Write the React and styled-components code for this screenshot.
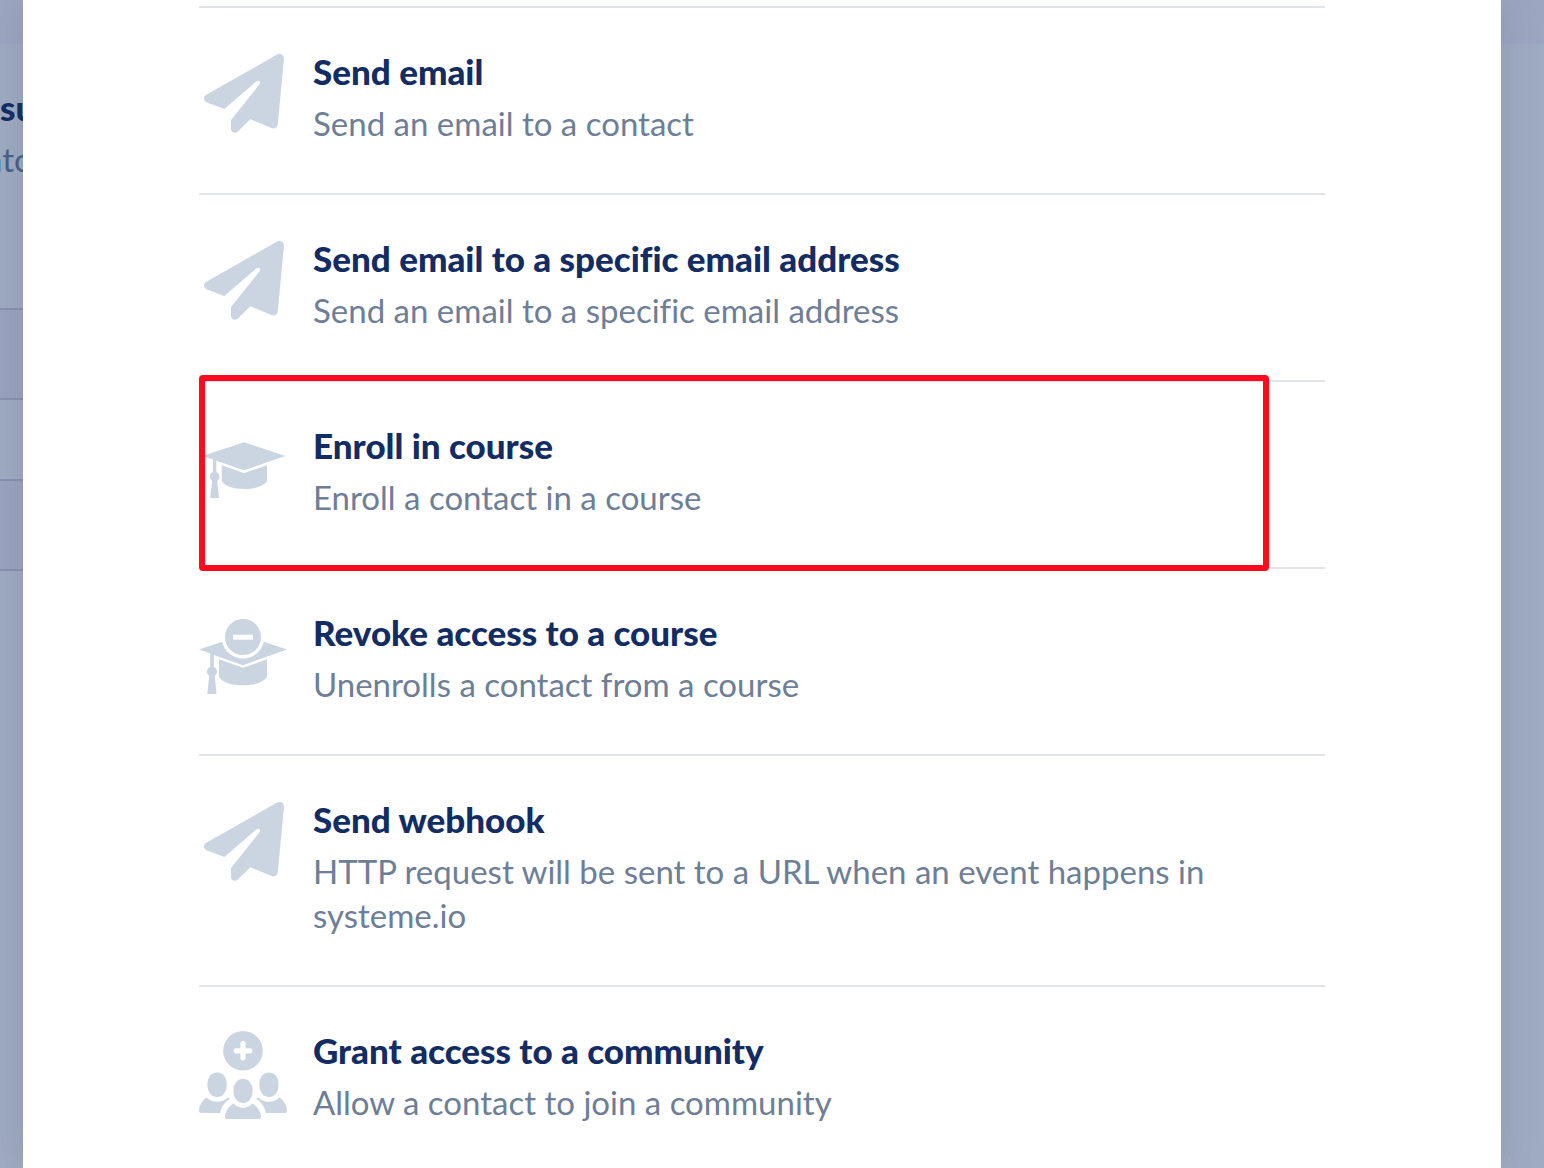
// react
import React, { useState } from "react";

// style
import styled, { createGlobalStyle } from "styled-components";

const GlobalStyle = createGlobalStyle`
  * {
    box-sizing: border-box;
  }

  body {
    margin: 0;
    background: #9fa9c2;
    font-family: Lato, "Liberation Sans", sans-serif;
  }
`;

const PageWrap = styled.div`
  display: grid;
  grid-template-columns: 23px 1fr 43px;
  min-height: 100vh;
`;

// dimmed page behind the modal
const Backdrop = styled.div`
  min-width: 0;
  overflow: hidden;
  background: #9fabc0;
`;

const TopBar = styled.div`
  height: 44px;
  background: #9ca6c0;
`;

const StepInfo = styled.div`
  height: 264px;
  padding-top: 41px;
  white-space: nowrap;
  line-height: 44px;
`;

const StepTitle = styled.div`
  color: #132c64;
  font-size: 35px;
  font-weight: 900;
`;

const StepText = styled.div`
  margin-top: 8px;
  margin-left: -16px;
  color: #4a5f88;
  font-size: 33px;
`;

const StepField = styled.div`
  height: 92px;
  margin-bottom: 79px;
  border-top: 2px solid #8792af;
  border-bottom: 2px solid #8792af;
  background: #9aa4bf;
`;

const Modal = styled.main`
  position: relative;
  min-width: 0;
  padding: 6px 176px 0;
  background: #fff;
  box-shadow: 0 0 36px rgba(60, 75, 110, 0.18);
`;

const ActionList = styled.ul`
  margin: 0;
  padding: 0;
  list-style: none;
`;

const ActionItem = styled.li`
  position: relative;
  border-top: 2px solid #e1e5e9;
`;

const ActionButton = styled.button`
  display: flex;
  align-items: flex-start;
  gap: 26px;
  width: 100%;
  padding: 41px 0 48px;
  border: 0;
  background: none;
  font-family: inherit;
  font-variant-ligatures: none;
  line-height: 44px;
  text-align: left;
  cursor: pointer;

  ${ActionItem}:last-child & {
    padding-bottom: 0;
  }
`;

const ActionIcon = styled.svg`
  flex: none;
  width: 88px;
  height: 88px;
  margin-top: 3px;
  fill: #cbd5e1;
`;

const ActionText = styled.span`
  flex: 1;
  min-width: 0;
`;

const ActionTitle = styled.span`
  display: block;
  color: #132c64;
  font-size: 35px;
  font-weight: 900;
`;

const ActionDesc = styled.span`
  display: block;
  margin-top: 8px;
  color: #6d7e96;
  font-size: 33px;
`;

const Highlight = styled.span`
  position: absolute;
  z-index: 1;
  top: -7px;
  right: 56px;
  bottom: -4px;
  left: 0;
  border: 6px solid #ff0a1f;
  border-radius: 4px;
  pointer-events: none;
`;

const icons = {
  plane: (
    <path d="M77.6 4.8C81.500 2.600 85.300 5 84.900 9.200L78.800 74.300C78.500 77.600 75.700 79.300 72.600 78.100L51.300 69.300L38.900 81.400C36 84.200 32 82.500 32 78.700V70L60.300 34.600C62.200 32 60.100 29.600 57.300 31.600L25.300 59L8 52.400C4 50.800 4 46.600 7.800 44.500Z" />
  ),
  cap: (
    <>
      <path d="M45 18.300L86.300 32L45 46.300L17.300 36.800V48C21.500 50.500 21.400 54.700 18.200 57L20 74H11.100L13.200 57C10 54.700 10 50 14 47.800V35.600L3.700 32Z" />
      <path d="M22.700 41.300L45 49L68 41.300V57.300C64 62.600 56 65 45.400 65C34.500 65 26.500 62.600 22.700 57.300Z" />
    </>
  ),
  revoke: (
    <>
      <path d="M44 8a18 18 0 1 0 0 36a18 18 0 1 0 0-36ZM34 23.700H54V28.700H34Z" fillRule="evenodd" />
      <path d="M0 38.400L23.200 30.700A21.300 21.300 0 0 0 64.800 30.700L88 38.400L44 54.200L14.800 43.900V55.700C19 58.200 19 62.500 15.800 64.800L17.500 83H8.300L10.200 64.800C7 62.500 7 58 11.200 55.700V42.600Z" />
      <path d="M20 48.300L44 56.800L68 48.300V66C64 71.700 55.500 74.300 44 74.300C32.500 74.300 24 71.700 20 66Z" />
    </>
  ),
  community: (
    <>
      <path
        d="M44 2a19.800 19.800 0 1 0 0 39.600a19.800 19.800 0 1 0 0-39.600ZM41.400 14.600a2.600 2.600 0 0 1 5.200 0V19.200H50.800a2.600 2.600 0 0 1 0 5.200H46.600V28.800a2.600 2.600 0 0 1-5.200 0V24.400H37.200a2.600 2.600 0 0 1 0-5.200H41.400Z"
        fillRule="evenodd"
      />
      <rect x="8.400" y="43.400" width="19.300" height="24.600" rx="9.650" ry="11" />
      <rect x="60.300" y="43.400" width="19.300" height="24.600" rx="9.650" ry="11" />
      <rect x="34.400" y="49.700" width="19.200" height="24.300" rx="9.600" ry="11" />
      <path d="M7.500 68.400C13.500 74.200 23 74.200 29 68.600L31 69.800C25.500 73.300 22 78 21.300 84H2Q0 84 0 82C0 76.500 3 71.500 7.500 68.400Z" />
      <path d="M80.500 68.400C74.500 74.200 65 74.200 59 68.600L57 69.800C62.500 73.300 66 78 66.700 84H86Q88 84 88 82C88 76.500 85 71.500 80.500 68.400Z" />
      <path d="M34.400 74.600C39.800 80.300 48.200 80.300 53.600 74.600C58.500 77.500 61.500 82 62 87.500Q62 90 60 90H28Q26 90 26 87.500C26.500 82 29.500 77.500 34.400 74.600Z" />
    </>
  ),
};

const actions = [
  {
    icon: "plane",
    title: "Send email",
    desc: "Send an email to a contact",
  },
  {
    icon: "plane",
    title: "Send email to a specific email address",
    desc: "Send an email to a specific email address",
  },
  {
    icon: "cap",
    title: "Enroll in course",
    desc: "Enroll a contact in a course",
  },
  {
    icon: "revoke",
    title: "Revoke access to a course",
    desc: "Unenrolls a contact from a course",
  },
  {
    icon: "plane",
    title: "Send webhook",
    desc: "HTTP request will be sent to a URL when an event happens in systeme.io",
  },
  {
    icon: "community",
    title: "Grant access to a community",
    desc: "Allow a contact to join a community",
  },
];

const App = () => {
  const [selected, setSelected] = useState("Enroll in course");

  return (
    <PageWrap>
      <GlobalStyle />
      <Backdrop>
        <TopBar />
        <StepInfo>
          <StepTitle>su</StepTitle>
          <StepText>nto</StepText>
        </StepInfo>
        <StepField />
        <StepField />
      </Backdrop>
      <Modal>
        <ActionList>
          {actions.map(action => (
            <ActionItem key={action.title}>
              <ActionButton
                type="button"
                onClick={() => setSelected(action.title)}
              >
                <ActionIcon viewBox="0 2 88 88" aria-hidden="true">
                  {icons[action.icon]}
                </ActionIcon>
                <ActionText>
                  <ActionTitle>{action.title}</ActionTitle>
                  <ActionDesc>{action.desc}</ActionDesc>
                </ActionText>
              </ActionButton>
              {selected === action.title && <Highlight />}
            </ActionItem>
          ))}
        </ActionList>
      </Modal>
      <Backdrop>
        <TopBar />
      </Backdrop>
    </PageWrap>
  );
};

export default App;
